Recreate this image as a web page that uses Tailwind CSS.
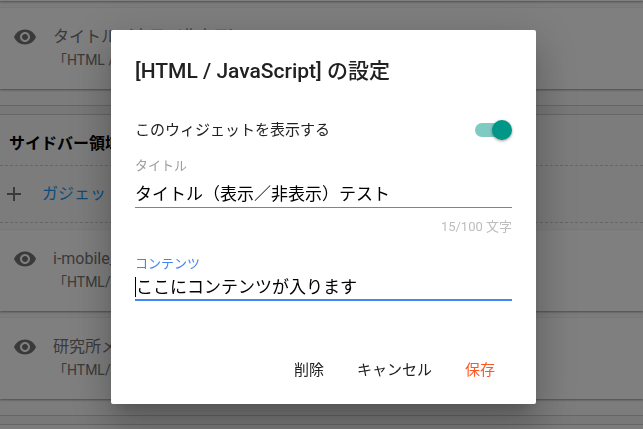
<!DOCTYPE html>
<html lang="ja">
<head>
  <meta charset="UTF-8">
  <meta name="viewport" content="width=device-width, initial-scale=1.0">
  <title>ガジェットの設定</title>
  <script src="https://cdn.jsdelivr.net/npm/@tailwindcss/browser@4"></script>
</head>
<body class="bg-[#f0f0f0] font-[Roboto,'Noto_Sans_CJK_JP',sans-serif]">
  <svg class="hidden">
    <symbol id="eye" viewBox="0 0 24 24">
      <path d="M12 4.5C7 4.5 2.73 7.61 1 12c1.73 4.39 6 7.5 11 7.5s9.27-3.11 11-7.5c-1.73-4.39-6-7.5-11-7.5zM12 17c-2.76 0-5-2.24-5-5s2.24-5 5-5 5 2.24 5 5-2.24 5-5 5zm0-8c-1.66 0-3 1.34-3 3s1.34 3 3 3 3-1.34 3-3-1.34-3-3-3z" />
    </symbol>
  </svg>

  <main>
    <section class="bg-[#f8f8f8] border-b border-[#cccccc]">
      <div class="bg-white h-px shadow-[0_1px_2px_rgba(0,0,0,0.5)]"></div>
      <div class="pt-[7px] pb-4">
        <article class="bg-white flex h-[81px] pl-[13px] pt-[17px] gap-4 shadow-[0_1px_2px_rgba(0,0,0,0.4)]">
          <svg class="w-6 h-6 fill-[#757575] shrink-0"><use href="#eye" /></svg>
          <div class="whitespace-nowrap text-[#757575]">
            <h3 class="text-base leading-6">タイトル（表示／非表示）テスト</h3>
            <p class="text-sm leading-[22px]">「HTML / JavaScript」</p>
          </div>
        </article>
      </div>
    </section>

    <section class="bg-[#f8f8f8] border-y border-[#cccccc] mt-2 pb-4">
      <h2 class="text-base leading-6 font-bold h-[50px] pt-[17px] pl-[9px]">サイドバー領域</h2>
      <a href="#" class="flex items-center gap-4 h-[58px] pl-[2px] border-y border-dashed border-[#cccccc] text-[#2196f3]">
        <svg class="w-6 h-6 fill-[#757575]" viewBox="0 0 24 24"><path d="M19 13h-6v6h-2v-6H5v-2h6V5h2v6h6v2z" /></svg>
        ガジェット
      </a>
      <div class="flex flex-col gap-[7px] pt-[7px]">
        <article class="bg-white flex h-[81px] pl-[13px] pt-[17px] gap-4 shadow-[0_1px_2px_rgba(0,0,0,0.4)]">
          <svg class="w-6 h-6 fill-[#757575] shrink-0"><use href="#eye" /></svg>
          <div class="whitespace-nowrap text-[#757575]">
            <h3 class="text-base leading-6">i-mobile_</h3>
            <p class="text-sm leading-[22px]">「HTML/JavaScript」</p>
          </div>
        </article>
        <article class="bg-white flex h-[81px] pl-[13px] pt-[17px] gap-4 shadow-[0_1px_2px_rgba(0,0,0,0.4)]">
          <svg class="w-6 h-6 fill-[#757575] shrink-0"><use href="#eye" /></svg>
          <div class="whitespace-nowrap text-[#757575]">
            <h3 class="text-base leading-6">研究所メ</h3>
            <p class="text-sm leading-[22px]">「HTML/JavaScript」</p>
          </div>
        </article>
      </div>
    </section>

    <section class="bg-[#f8f8f8] border-t border-[#cccccc] mt-2 h-[5px]"></section>
  </main>

  <div class="fixed inset-0 bg-black/50 flex justify-center items-start pt-[30px] pl-1">
    <form role="dialog" aria-labelledby="dialogTitle" class="bg-white w-full max-w-[425px] rounded-xs px-6 pt-[25px] pb-4 shadow-[0_11px_15px_-7px_rgba(0,0,0,0.2),0_24px_38px_3px_rgba(0,0,0,0.14),0_9px_46px_8px_rgba(0,0,0,0.12)]">
      <h1 id="dialogTitle" class="text-[21px] leading-8 font-medium text-[#212121]">[HTML / JavaScript] の設定</h1>

      <div class="flex items-center justify-between h-5 mt-[33px]">
        <label for="visible" class="text-[15px] text-[#212121]">このウィジェットを表示する</label>
        <input id="visible" type="checkbox" checked class="appearance-none relative w-[37px] h-5 before:absolute before:left-0 before:top-[3px] before:w-9 before:h-[14px] before:rounded-full before:bg-[#009688]/50 after:absolute after:right-0 after:top-0 after:w-5 after:h-5 after:rounded-full after:bg-[#009688] after:shadow-[0_1px_3px_rgba(0,0,0,0.4)]">
      </div>

      <div class="mt-4">
        <label for="title" class="block text-[13px] leading-5 text-[#9e9e9e]">タイトル</label>
        <input id="title" type="text" maxlength="100" value="タイトル（表示／非表示）テスト" class="block w-full h-6 mt-[7px] text-[17px] text-black outline-none">
        <div class="border-b border-[#ff5722]"></div>
        <p class="mt-[9px] text-right text-[13px] leading-5 text-[#bdbdbd]">15/100 文字</p>
      </div>

      <div class="mt-[17px]">
        <label for="content" class="block text-[13px] leading-5 text-[#4285f4]">コンテンツ</label>
        <textarea id="content" rows="1" class="block w-full h-5 mt-[3px] text-[17px] leading-5 text-black border-l border-black outline-none resize-none overflow-hidden">ここにコンテンツが入ります</textarea>
        <div class="mt-[2px] border-b-2 border-[#4285f4]"></div>
      </div>

      <div class="flex justify-end gap-px mt-[51px] pr-px text-[15px] text-[#212121]">
        <button type="button" class="h-9 px-4">削除</button>
        <button type="button" class="h-9 px-4">キャンセル</button>
        <button type="submit" class="h-9 px-4 text-[#ff5722]">保存</button>
      </div>
    </form>
  </div>
</body>
</html>
